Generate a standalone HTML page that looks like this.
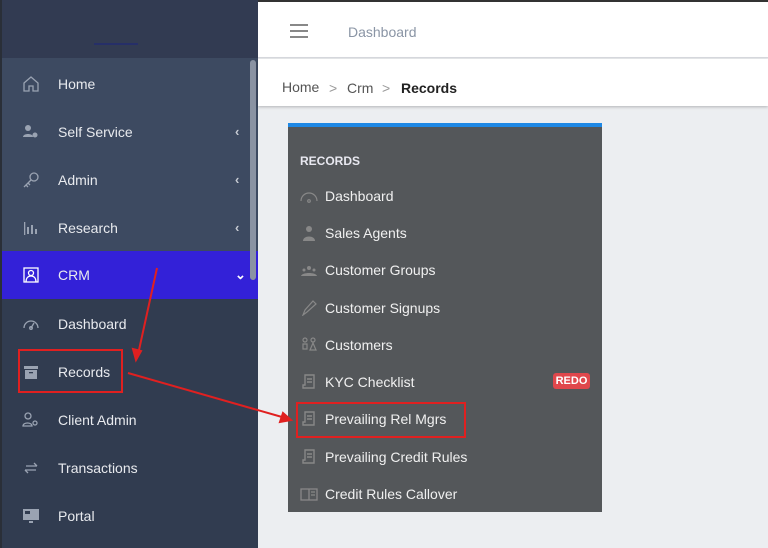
<!DOCTYPE html>
<html><head><style>
*{margin:0;padding:0;box-sizing:border-box}
body{width:768px;height:548px;overflow:hidden;background:#eceef1;font-family:"Liberation Sans",sans-serif;position:relative}
.sb{position:absolute;left:0;top:0;width:258px;height:548px;background:#313c50;border-left:2px solid #2a2f38}
.hd{position:absolute;left:0;top:0;width:256px;height:58px;background:#323b52}
.menu{position:absolute;left:0;top:58px;width:256px;height:193px;background:#3d4a61}
.it{position:absolute;left:0;width:256px;height:48px;color:#e8eaee;font-size:14px;line-height:48px}
.it span{position:absolute;left:56px}
.it svg{position:absolute;left:20px;top:15px}
.car{position:absolute;left:233px;color:#c8ccd4;font-size:13px}
.crm{background:#3321d8}
.top{position:absolute;left:258px;top:2px;width:510px;height:56px;background:#fff;border-bottom:1px solid #d8dadf}
.bc{position:absolute;left:258px;top:59px;width:510px;height:47px;background:#fff;box-shadow:0 1px 3px rgba(0,0,0,.25);font-size:14px;color:#555;line-height:58px}
.pn{position:absolute;left:288px;top:123px;width:314px;height:389px;background:#54575a;border-top:4px solid #1e88e5}
.pi{position:absolute;left:0;width:314px;color:#f0f0f0;font-size:14px;height:20px;line-height:20px}
.pi span{position:absolute;left:37px}
.pi svg{position:absolute;left:12px;top:2px}
</style></head><body>
<div style="position:absolute;left:0;top:0;width:768px;height:2px;background:#333"></div>
<div class="sb">
<div class="hd"><div style="position:absolute;left:92px;top:43px;width:44px;height:2px;background:#1a237e;opacity:.5"></div></div>
<div class="menu"></div>
<div class="it" style="top:60px"><svg width="18" height="18" viewBox="0 0 18 18" fill="none" stroke="#9aa3b2" stroke-width="1.3"><path d="M2 8L9 2l7 6v8h-5v-5H7v5H2z"/></svg><span>Home</span></div>
<div class="it" style="top:108px"><svg width="18" height="18" viewBox="0 0 18 18" fill="#9aa3b2"><circle cx="6" cy="5" r="3"/><path d="M1 14c0-4 10-4 10 0z"/><circle cx="13" cy="12" r="2.5"/></svg><span>Self Service</span><b class="car">‹</b></div>
<div class="it" style="top:156px"><svg width="18" height="18" viewBox="0 0 18 18" fill="none" stroke="#9aa3b2" stroke-width="1.3"><circle cx="12" cy="6" r="4"/><path d="M9 9L2 16M4 14l2 2M6 12l2 2"/></svg><span>Admin</span><b class="car">‹</b></div>
<div class="it" style="top:204px"><svg width="18" height="18" viewBox="0 0 18 18" fill="#9aa3b2"><rect x="2" y="3" width="1.3" height="13"/><rect x="5" y="8" width="2" height="7"/><rect x="9" y="6" width="2" height="9"/><rect x="13" y="10" width="2" height="5"/></svg><span>Research</span><b class="car">‹</b></div>
<div class="it crm" style="top:251px"><svg width="18" height="18" viewBox="0 0 18 18" fill="none" stroke="#fff" stroke-width="1.3"><rect x="2" y="2" width="14" height="14"/><circle cx="9" cy="7" r="2.5"/><path d="M4 16c0-4 2-6 5-6s5 2 5 6"/></svg><span>CRM</span><b class="car" style="color:#fff">⌄</b></div>
<div class="it" style="top:300px"><svg width="18" height="18" viewBox="0 0 18 18" fill="none" stroke="#9aa3b2" stroke-width="1.3"><path d="M2 13a7 7 0 1 1 14 0"/><circle cx="9" cy="13" r="1.3"/><path d="M9 13l3-5"/></svg><span>Dashboard</span></div>
<div class="it" style="top:348px"><svg width="18" height="18" viewBox="0 0 18 18" fill="#9aa3b2"><rect x="2" y="3" width="14" height="3"/><rect x="3" y="7" width="12" height="9"/><rect x="7" y="9" width="4" height="1.3" fill="#313c50"/></svg><span>Records</span></div>
<div class="it" style="top:396px"><svg width="18" height="18" viewBox="0 0 18 18" fill="none" stroke="#9aa3b2" stroke-width="1.3"><circle cx="6" cy="5" r="3"/><path d="M1 15c0-4 9-4 9 0z"/><circle cx="13" cy="12" r="2"/></svg><span>Client Admin</span></div>
<div class="it" style="top:444px"><svg width="18" height="18" viewBox="0 0 18 18" fill="none" stroke="#9aa3b2" stroke-width="1.3"><path d="M4 7h11M12 4l3 3M14 11H3M6 14l-3-3"/></svg><span>Transactions</span></div>
<div class="it" style="top:492px"><svg width="18" height="18" viewBox="0 0 18 18" fill="#9aa3b2"><rect x="1" y="2" width="16" height="11"/><rect x="3" y="4" width="5" height="3" fill="#313c50"/><rect x="7" y="14" width="4" height="2"/></svg><span>Portal</span></div>
<div style="position:absolute;left:248px;top:60px;width:6px;height:220px;border-radius:3px;background:#8a93a3"></div>
</div>
<div class="top">
<div style="position:absolute;left:32px;top:22px;width:18px;height:2px;background:#888;box-shadow:0 6px 0 #888,0 12px 0 #888"></div>
<div style="position:absolute;left:90px;top:22px;font-size:14px;color:#8a95a5">Dashboard</div>
</div>
<div class="bc"><span style="position:absolute;left:24px;top:-1px">Home</span><span style="position:absolute;left:71px;color:#999">&gt;</span><span style="position:absolute;left:89px">Crm</span><span style="position:absolute;left:124px;color:#999">&gt;</span><span style="position:absolute;left:143px;color:#222;font-weight:bold">Records</span></div>
<div class="pn">
<div style="position:absolute;left:12px;top:27px;font-size:12px;font-weight:bold;color:#e8e8f0">RECORDS</div>
<div class="pi" style="top:59px"><svg width="18" height="16" fill="none" stroke="#888" stroke-width="1.2"><path d="M1 13a8 8 0 1 1 16 0"/><circle cx="9" cy="13" r="1.3"/></svg><span>Dashboard</span></div>
<div class="pi" style="top:96px"><svg width="18" height="16" fill="#888"><circle cx="9" cy="4" r="3"/><path d="M3 16c0-6 12-6 12 0z"/></svg><span>Sales Agents</span></div>
<div class="pi" style="top:133px"><svg width="18" height="16" fill="#888"><circle cx="9" cy="6" r="2"/><circle cx="4" cy="8" r="1.5"/><circle cx="14" cy="8" r="1.5"/><path d="M1 14c1-4 15-4 16 0z"/></svg><span>Customer Groups</span></div>
<div class="pi" style="top:171px"><svg width="18" height="16" fill="none" stroke="#888" stroke-width="1.2"><path d="M3 15l2-5 8-9 3 3-9 8z"/></svg><span>Customer Signups</span></div>
<div class="pi" style="top:208px"><svg width="18" height="16" fill="none" stroke="#888" stroke-width="1.2"><circle cx="5" cy="3" r="2"/><circle cx="13" cy="3" r="2"/><path d="M3 7h4v5H3zM13 6l-3 7h6z"/></svg><span>Customers</span></div>
<div class="pi" style="top:245px"><svg width="18" height="16" fill="none" stroke="#888" stroke-width="1.4"><path d="M5 1h9v13H3v-3h2zM7 5h5M7 8h5"/></svg><span>KYC Checklist</span><div style="position:absolute;left:265px;top:1px;width:37px;height:16px;background:#e0474c;border-radius:3px;color:#fff;font-size:11px;font-weight:bold;text-align:center;line-height:16px">REDO</div></div>
<div class="pi" style="top:282px"><svg width="18" height="16" fill="none" stroke="#888" stroke-width="1.4"><path d="M5 1h9v13H3v-3h2zM7 5h5M7 8h5"/></svg><span>Prevailing Rel Mgrs</span></div>
<div class="pi" style="top:320px"><svg width="18" height="16" fill="none" stroke="#888" stroke-width="1.4"><path d="M5 1h9v13H3v-3h2zM7 5h5M7 8h5"/></svg><span>Prevailing Credit Rules</span></div>
<div class="pi" style="top:357px"><svg width="18" height="16" fill="none" stroke="#888" stroke-width="1.3"><rect x="1" y="3" width="16" height="11"/><path d="M9 3v11M11 6h4M11 9h4"/></svg><span>Credit Rules Callover</span></div>
</div>
<div style="position:absolute;left:18px;top:349px;width:105px;height:44px;border:2px solid #e02020"></div>
<div style="position:absolute;left:296px;top:402px;width:170px;height:36px;border:2px solid #e02020"></div>
<svg style="position:absolute;left:0;top:0" width="768" height="548"><g stroke="#e02020" stroke-width="2" fill="#e02020"><line x1="157" y1="268" x2="139" y2="350"/><path d="M136 360l-3-11 8 2z"/><line x1="128" y1="373" x2="282" y2="417"/><path d="M291 420l-11 2 3-9z"/></g></svg>
</body></html>
